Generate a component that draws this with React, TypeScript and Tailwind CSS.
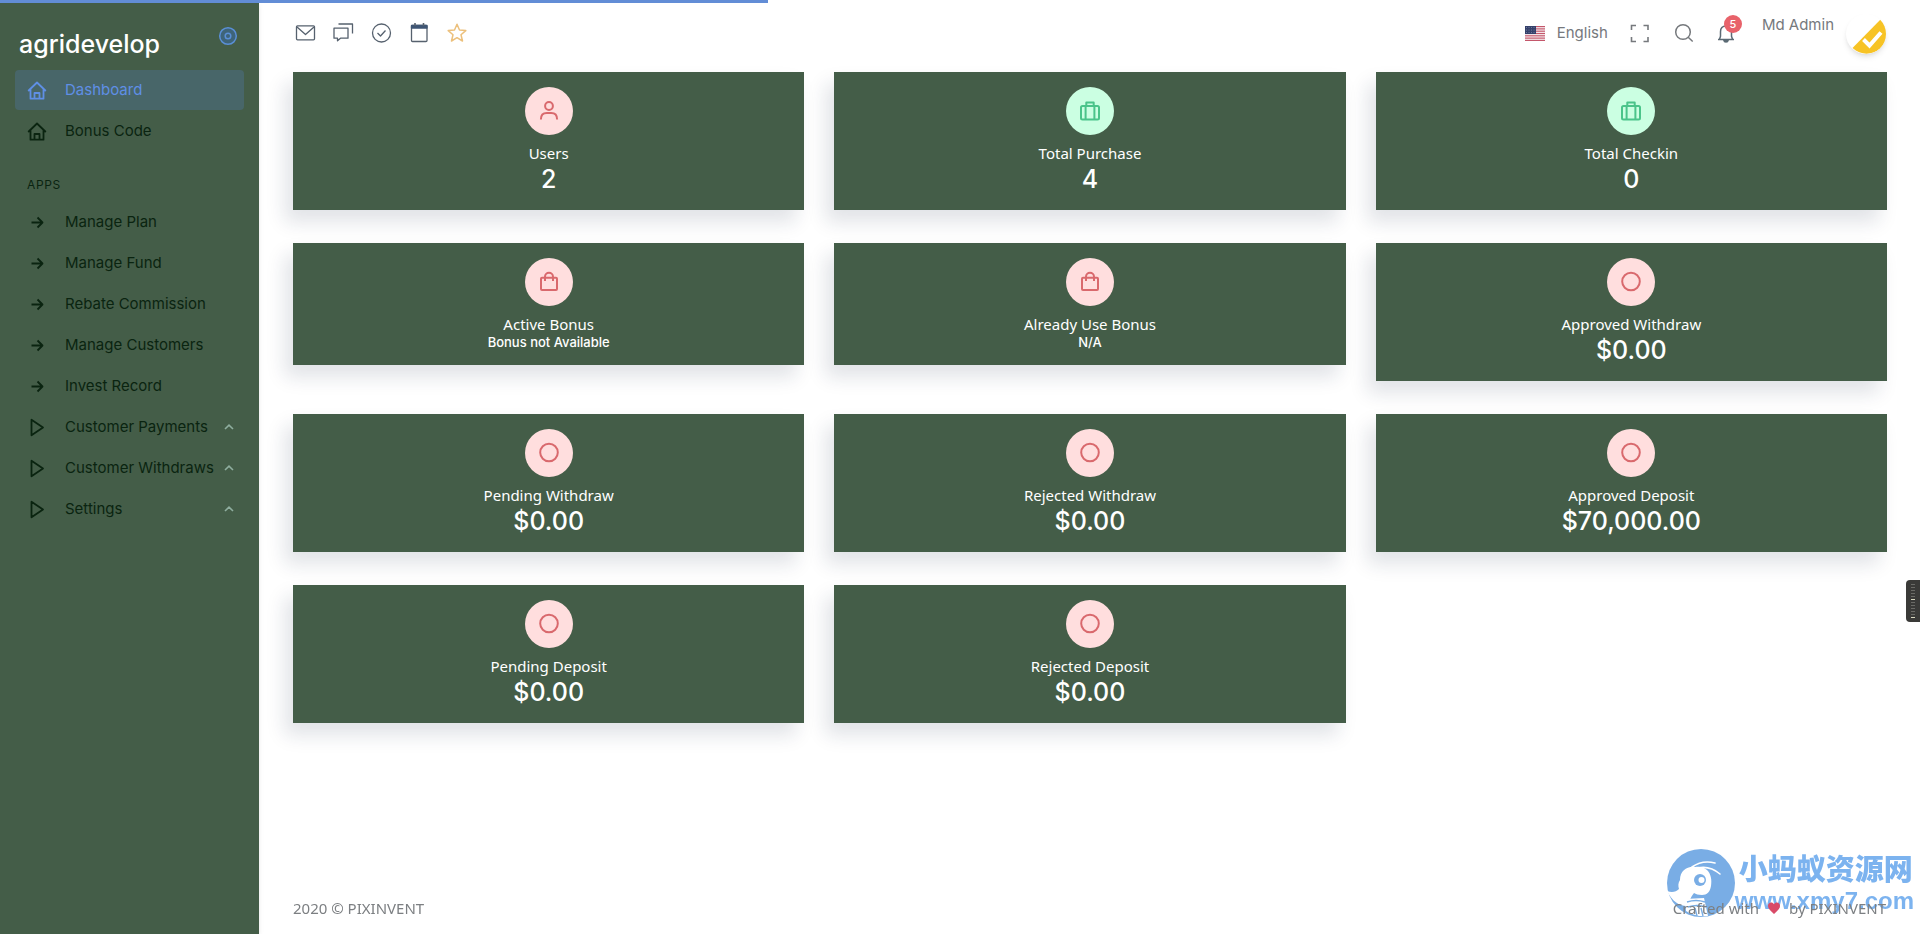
import React from 'react';
import clsx from 'clsx';

type IconProps = { className?: string; strokeWidth?: number; children?: React.ReactNode };

/**
 * Shared outline icon wrapper
 */
function Icon({ className, strokeWidth = 2, children }: IconProps) {
  return (
    <svg
      viewBox="0 0 24 24"
      fill="none"
      stroke="currentColor"
      strokeWidth={strokeWidth}
      strokeLinejoin="round"
      aria-hidden="true"
      className={clsx('h-6 w-6 shrink-0', className)}
    >
      {children}
    </svg>
  );
}

const HomeIcon = () => (
  <Icon strokeWidth={1.8}>
    <path d="M3.2 13 12 4.500l8.800 8.500M5.500 11v9.700h13V11M9.500 20.500v-5.500h5v5.500" />
  </Icon>
);

const ArrowIcon = () => (
  <Icon strokeWidth={1.8}>
    <path d="M6.500 12.500h11M12.500 7.500l5 5-5 5" />
  </Icon>
);

const PlayIcon = () => (
  <Icon strokeWidth={1.8}>
    <path d="M6.500 4.700v15.600L18 12.500z" />
  </Icon>
);

const UserIcon = () => (
  <Icon>
    <circle cx="12" cy="7" r="3.900" />
    <path d="M3.900 20.500c0-4 2.400-6.400 5.900-6.400h4.400c3.500 0 5.900 2.400 5.900 6.400" />
  </Icon>
);

const BriefcaseIcon = () => (
  <Icon>
    <rect x="3" y="7" width="18" height="13.500" rx="1.500" />
    <path d="M8.300 7V3.500h7.400V7M7.600 7v13.500M16.400 7v13.500" />
  </Icon>
);

const BagIcon = () => (
  <Icon>
    <rect x="4" y="7.800" width="16" height="12.300" rx="1" />
    <path d="M8 11V6.800a4 4 0 0 1 8 0V11" />
  </Icon>
);

const CircleIcon = () => (
  <Icon>
    <circle cx="12" cy="11.500" r="8.800" />
  </Icon>
);

const menu = [
  { label: 'Dashboard', icon: HomeIcon, active: true },
  { label: 'Bonus Code', icon: HomeIcon },
];

const apps = [
  { label: 'Manage Plan', icon: ArrowIcon },
  { label: 'Manage Fund', icon: ArrowIcon },
  { label: 'Rebate Commission', icon: ArrowIcon },
  { label: 'Manage Customers', icon: ArrowIcon },
  { label: 'Invest Record', icon: ArrowIcon },
  { label: 'Customer Payments', icon: PlayIcon, sub: true },
  { label: 'Customer Withdraws', icon: PlayIcon, sub: true },
  { label: 'Settings', icon: PlayIcon, sub: true },
];

const stats = [
  { label: 'Users', value: '2', icon: UserIcon },
  { label: 'Total Purchase', value: '4', icon: BriefcaseIcon, green: true },
  { label: 'Total Checkin', value: '0', icon: BriefcaseIcon, green: true },
  { label: 'Active Bonus', value: 'Bonus not Available', icon: BagIcon, small: true },
  { label: 'Already Use Bonus', value: 'N/A', icon: BagIcon, small: true },
  { label: 'Approved Withdraw', value: '$0.00', icon: CircleIcon },
  { label: 'Pending Withdraw', value: '$0.00', icon: CircleIcon },
  { label: 'Rejected Withdraw', value: '$0.00', icon: CircleIcon },
  { label: 'Approved Deposit', value: '$70,000.00', icon: CircleIcon },
  { label: 'Pending Deposit', value: '$0.00', icon: CircleIcon },
  { label: 'Rejected Deposit', value: '$0.00', icon: CircleIcon },
];

type MenuItem = { label: string; icon: React.ComponentType; active?: boolean; sub?: boolean };

function MenuList({ items }: { items: MenuItem[] }) {
  return (
    <ul className="flex flex-col gap-px">
      {items.map(({ label, icon: ItemIcon, active, sub }) => (
        <li key={label}>
          <a
            href="#"
            className={clsx(
              'flex h-10 items-center rounded-sm px-[10px] text-[15px] leading-5',
              active ? 'bg-[#5a8dee]/20 text-[#5f8fe6]' : 'text-[#0a2410]'
            )}
          >
            <ItemIcon />
            <span className="ml-4 whitespace-nowrap">{label}</span>
            {sub && (
              <svg viewBox="0 0 10 10" className="ml-auto h-[10px] w-[10px] shrink-0 text-[#8fae9f]" fill="none" stroke="currentColor" strokeWidth="1.600" aria-hidden="true">
                <path d="M1 7 5 3.200l4 3.800" />
              </svg>
            )}
          </a>
        </li>
      ))}
    </ul>
  );
}

function Sidebar() {
  return (
    <aside className="w-[259px] shrink-0 bg-[#445d48] px-[15px] shadow-md">
      <div className="flex h-[70px] items-start justify-between px-1">
        <a href="#" className="pt-7 text-[25px] font-medium leading-8 text-white">
          agridevelop
        </a>
        <button type="button" aria-label="Toggle menu" className="mt-6 text-[#5a8fd6]">
          <Icon strokeWidth={1.5}>
            <circle cx="12" cy="12" r="8.300" fill="#3e6479" />
            <circle cx="12" cy="12" r="2.800" />
          </Icon>
        </button>
      </div>
      <nav>
        <MenuList items={menu} />
        <h2 className="flex h-[51px] items-center pl-3 pt-4 text-xs tracking-wider text-[#0a2410]">APPS</h2>
        <MenuList items={apps} />
      </nav>
    </aside>
  );
}

function UsFlag() {
  return (
    <svg viewBox="0 0 20 15" className="h-[15px] w-5 shrink-0" aria-hidden="true">
      <rect width="20" height="15" fill="#f6eef0" />
      {[0, 2, 4, 6, 8, 10, 12].map((i) => (
        <rect key={i} y={i * 1.154} width="20" height="1.154" fill="#c4576b" />
      ))}
      <rect width="11" height="8" fill="#34416b" />
      {[1.5, 4, 6.5].map((y) =>
        [1.500, 4, 6.500, 9].map((x) => <circle key={`${x}-${y}`} cx={x} cy={y} r="0.4" fill="#b9c0d6" />)
      )}
    </svg>
  );
}

function Avatar() {
  return (
    <svg viewBox="0 0 40 40" className="h-10 w-10 shrink-0 rounded-full bg-white shadow-md" aria-hidden="true">
      <path d="M35.500 4.500C42 14 43 26 34 34.500 27 41 15 42 6.500 34z" fill="#f7c325" />
      <path d="M17.500 25.500l6 6L35 18.500" fill="none" stroke="#fff" strokeWidth="4" />
    </svg>
  );
}

function Header() {
  return (
    <header className="flex h-[72px] items-start justify-between px-[34px] text-[15px] text-[#76797d]">
      <div className="flex gap-[14px] pt-[21px] text-[#56616e]">
        <button type="button" aria-label="Email">
          <Icon strokeWidth={1.3}>
            <rect x="3.500" y="4.800" width="18" height="14" rx="1" />
            <path d="m4 6 8.500 7.500L21 6" />
          </Icon>
        </button>
        <button type="button" aria-label="Chat">
          <Icon strokeWidth={1.300}>
            <path d="M7.500 3h14v9.500M3 7.200h14v10H9.500L6.500 19.800v-2.600H3z" />
          </Icon>
        </button>
        <button type="button" aria-label="Todo">
          <Icon strokeWidth={1.300}>
            <circle cx="12.500" cy="12" r="9" />
            <path d="m8.500 12 3 3 5-5.500" />
          </Icon>
        </button>
        <button type="button" aria-label="Calendar">
          <Icon strokeWidth={1.300}>
            <rect x="4.500" y="4.500" width="15.500" height="16" rx="1" />
            <path d="M4.500 4.500h15.500v2.500h-15.500z" fill="#3f5675" stroke="#3f5675" />
            <path d="M8 2v3M16.500 2v3" strokeWidth="1.600" />
          </Icon>
        </button>
        <button type="button" aria-label="Bookmarks" className="text-[#ecc07c]">
          <Icon strokeWidth={1.500}>
            <path d="m12 3.200 2.500 5.800 6.300.6-4.800 4.200 1.500 6.200-5.500-3.300L6.500 20 8 13.800 3.200 9.600l6.300-.6z" />
          </Icon>
        </button>
      </div>

      <div className="flex items-start">
        <button type="button" className="mt-[21px] flex h-6 items-center gap-3">
          <UsFlag />
          English
        </button>
        <button type="button" aria-label="Fullscreen" className="ml-5 mt-[21px]">
          <Icon strokeWidth={1.600}>
            <path d="M3.500 9V4.500H8M15.500 4.500H20V9M20 16v4.500h-4.500M8 20.500H3.500V16" strokeLinejoin="miter" />
          </Icon>
        </button>
        <button type="button" aria-label="Search" className="ml-5 mt-[21px]">
          <Icon strokeWidth={1.500}>
            <circle cx="11" cy="11" r="7.300" />
            <path d="m16.200 16.200 4.500 4.300" />
          </Icon>
        </button>
        <button type="button" aria-label="Notifications" className="relative ml-[18px] mt-[21px] text-[#5b6a74]">
          <Icon strokeWidth={1.500}>
            <path d="M4 18.500h16M5.500 18.300l1-3v-4.500c0-3.500 2.200-5.800 5.500-5.800s5.500 2.300 5.500 5.800v4.500l1 3" />
            <path d="M9.800 19.200h4.400c-.2 1.200-1.100 1.900-2.200 1.900s-2-.7-2.200-1.900z" fill="currentColor" />
          </Icon>
          <span className="absolute -right-1 -top-[6px] flex h-[18px] w-[18px] items-center justify-center rounded-full bg-[#e8626a] text-[11px] font-medium text-white">
            5
          </span>
        </button>
        <span className="ml-6 mt-[13px] leading-6">Md Admin</span>
        <a href="#" aria-label="Profile" className="ml-3 mt-[14px]">
          <Avatar />
        </a>
      </div>
    </header>
  );
}

function StatCard({ label, value, icon: StatIcon, green, small }: (typeof stats)[number]) {
  return (
    <div className="flex flex-col items-center bg-[#445d48] py-[15px] text-white shadow-[-8px_12px_18px_0_rgba(25,42,70,0.13)]">
      <div
        className={clsx(
          'mb-2 flex h-12 w-12 items-center justify-center rounded-full',
          green ? 'bg-[#cbffe2] text-[#4bc48a]' : 'bg-[#ffdede] text-[#d9696d]'
        )}
      >
        <StatIcon />
      </div>
      <div className="font-['Noto_Sans',sans-serif] text-[15px] leading-5">{label}</div>
      <div className={clsx('font-medium', small ? 'text-[13px] leading-4' : 'text-[25px] leading-8')}>{value}</div>
    </div>
  );
}

function Watermark() {
  return (
    <div className="pointer-events-none fixed bottom-4 right-[6px] flex items-center text-[#519aea] opacity-75">
      <svg viewBox="0 0 70 70" className="h-[70px] w-[70px] shrink-0" aria-hidden="true">
        <circle cx="36" cy="35" r="34" fill="#4d92dc" />
        {/* Ant head, jaw and body */}
        <path
          fill="#fff"
          d="M15 32c0-9 7-14 15-13 5-1 9 0 12 3 4 4 5 10 4 16-1 6-4 9-9 9-4 0-6-1-8-2-2 3-4 5-4 8 0 3-1 5-3 5-8 0-15-5-20-15 5 2 9 1 12-2-1-3-1-6 1-9z"
        />
        <path fill="#fff" d="M20 51l19-1 4 18c-8 1-16-1-22-5z" />
        <path d="M27 19c7-5 15-6 23-4M33 20c9-2 16 1 22 6" fill="none" stroke="#fff" strokeWidth="1.600" strokeLinecap="round" />
        <circle cx="35" cy="32" r="6" fill="#4d92dc" />
        <circle cx="36.500" cy="32" r="3" fill="#fff" />
        <path d="M22 54c6-2 12-2 18 0M23 59c6-2 12-2 18 0M30 60l2 8M36 60l2 8" fill="none" stroke="#4d92dc" strokeWidth="1.400" />
      </svg>
      <div className="flex flex-col whitespace-nowrap">
        <span className="pl-1 font-['Noto_Sans_CJK_SC',sans-serif] text-[29px] font-black leading-9">小蚂蚁资源网</span>
        <span className="font-['Liberation_Sans',sans-serif] text-2xl font-bold leading-8">www.xmy7.com</span>
      </div>
    </div>
  );
}

export default function App() {
  return (
    <div className="flex min-h-screen bg-white font-['Inter',sans-serif]">
      {/* Page loading bar */}
      <div className="fixed left-0 top-0 z-10 h-[3px] w-2/5 bg-[#628dd6]" />

      <Sidebar />

      <div className="flex min-w-0 flex-1 flex-col">
        <Header />

        <main className="grid grid-cols-3 items-start gap-x-[30px] gap-y-[33px] pl-[34px] pr-[33px]">
          {stats.map((stat) => (
            <StatCard key={stat.label} {...stat} />
          ))}
        </main>

        <footer className="relative z-10 mt-auto flex items-center justify-between px-[34px] pb-[14px] font-['Noto_Sans',sans-serif] text-[15px] leading-6 text-[#7c7f82]">
          <span>2020 © PIXINVENT</span>
          <span className="flex items-center gap-2">
            Crafted with
            <svg viewBox="0 0 14 14" className="h-[14px] w-[14px]" fill="#d94a68" aria-hidden="true">
              <path d="M7 13C3 9.500 1 7.500 1 4.800 1 2.900 2.400 1.500 4.100 1.500 5.300 1.500 6.400 2.200 7 3.200 7.600 2.200 8.700 1.500 9.900 1.500 11.600 1.500 13 2.900 13 4.800 13 7.500 11 9.500 7 13z" />
            </svg>
            by PIXINVENT
          </span>
        </footer>
      </div>

      {/* Side widget handle */}
      <div className="fixed right-0 top-[580px] flex h-[42px] w-[14px] flex-col items-center justify-center gap-[2px] rounded-l bg-[#3a3a38]">
        {[0, 1, 2, 3, 4, 5, 6, 7, 8, 9, 10, 11].map((i) => (
          <span key={i} className={clsx('h-px w-1', i === 5 || i === 11 ? 'bg-[#d8d8c0]' : 'bg-[#6a6a66]')} />
        ))}
      </div>

      <Watermark />
    </div>
  );
}
